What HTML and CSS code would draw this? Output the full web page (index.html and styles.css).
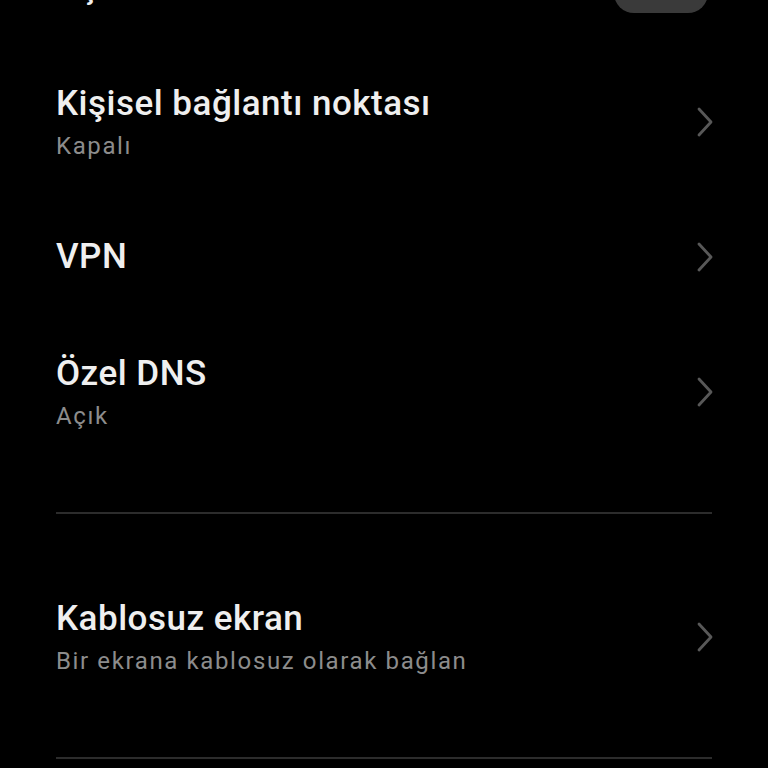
FILE: index.html
```html
<!DOCTYPE html>
<html lang="tr">
<head>
<meta charset="utf-8">
<link rel="stylesheet" href="styles.css">
</head>
<body>
<div class="screen">
  <div class="row">
    <div class="text"><div class="title">Uçak modu</div></div>
    <div class="toggle"></div>
  </div>
  <div class="row">
    <div class="text"><div class="title">Kişisel bağlantı noktası</div><div class="sub">Kapalı</div></div>
    <svg class="chev" viewBox="0 0 16 30"><path d="M2 2 L14 15 L2 28" /></svg>
  </div>
  <div class="row">
    <div class="text"><div class="title">VPN</div></div>
    <svg class="chev" viewBox="0 0 16 30"><path d="M2 2 L14 15 L2 28" /></svg>
  </div>
  <div class="row">
    <div class="text"><div class="title">Özel DNS</div><div class="sub">Açık</div></div>
    <svg class="chev" viewBox="0 0 16 30"><path d="M2 2 L14 15 L2 28" /></svg>
  </div>
  <div class="divider"></div>
  <div class="row">
    <div class="text"><div class="title">Kablosuz ekran</div><div class="sub">Bir ekrana kablosuz olarak bağlan</div></div>
    <svg class="chev" viewBox="0 0 16 30"><path d="M2 2 L14 15 L2 28" /></svg>
  </div>
  <div class="divider"></div>
</div>
</body>
</html>
```
FILE: styles.css
```css
html, body {
  margin: 0;
  padding: 0;
  background: #000;
  height: 100%;
  overflow: hidden;
}
.screen {
  margin-top: -81px;
  padding: 0 56px;
  font-family: Roboto, "Noto Sans", sans-serif;
}
.row {
  height: 135px;
  display: flex;
  align-items: center;
  justify-content: space-between;
}
.text {
  display: flex;
  flex-direction: column;
}
.title {
  color: #efefef;
  font-size: 35px;
  font-weight: 500;
  line-height: 41px;
  letter-spacing: 0.5px;
}
.sub {
  color: #8c8c8c;
  font-size: 24px;
  line-height: 28px;
  margin-top: 8px;
  letter-spacing: 1.62px;
}
.chev {
  width: 16px;
  height: 30px;
  margin-right: -1px;
  fill: none;
  stroke: #585858;
  stroke-width: 2.8;
  stroke-linecap: round;
  stroke-linejoin: round;
}
.toggle {
  width: 94px;
  height: 52px;
  border-radius: 20px;
  background: #3a3a3a;
  margin-right: 4px;
}
.divider {
  height: 2px;
  background: #2c2c2c;
  margin: 53px 0 55px;
}
```
